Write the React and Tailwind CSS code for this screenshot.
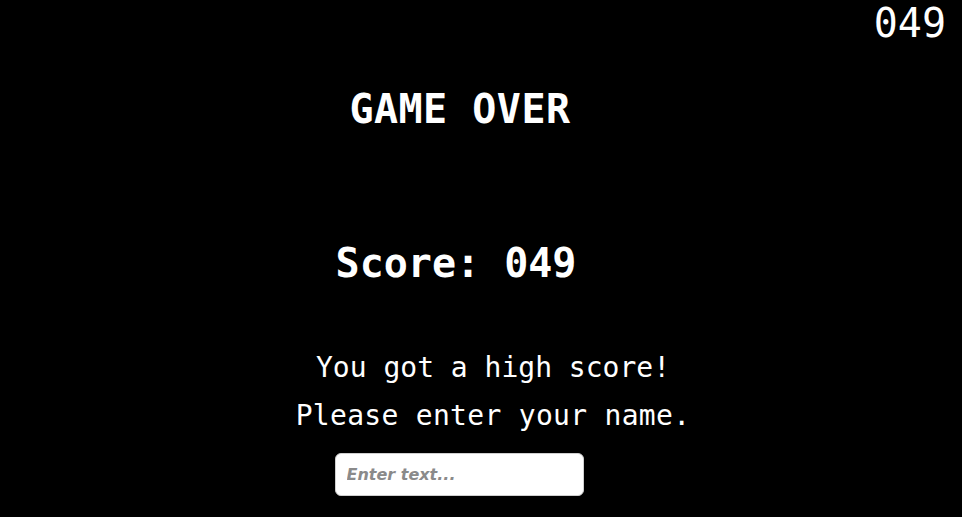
import { useState } from "react";

const PIXEL = { fontFamily: '"DejaVu Sans Mono", "Liberation Mono", monospace' };

export default function App() {
  const [name, setName] = useState("");
  const score = "049";

  return (
    <div className="w-full bg-[#ececec]">
      <div className="h-[517px] bg-black text-white flex flex-col" style={PIXEL}>
        {/* HUD score */}
        <div className="flex justify-end pr-[16px] pt-[3px]">
          <span className="text-[40px] leading-[40px]">{score}</span>
        </div>

        <div className="flex justify-center pr-[42px] mt-[46px]">
          <h1 className="text-[40px] leading-none font-bold tracking-[0.5px]">GAME OVER</h1>
        </div>

        <div className="flex justify-center pr-[50px] mt-[114px]">
          <p className="text-[40px] leading-none font-bold">Score: {score}</p>
        </div>

        <div className="flex flex-col items-center pl-[24px] mt-[71px]">
          <p className="text-[28px] leading-none">You got a high score!</p>
          <p className="text-[28px] leading-none tracking-[0.3px] mt-[20px]">Please enter your name.</p>
        </div>

        <div className="flex justify-center pr-[44px] mt-[23px]">
          <input
            value={name}
            onChange={(e) => setName(e.target.value)}
            placeholder="Enter text..."
            className="w-[249px] h-[43px] rounded-[6px] border border-[#cfcfcf] bg-white px-[11px] text-[16px] font-bold italic text-[#333] placeholder:text-[#8a8a8a] outline-none"
            style={{ fontFamily: '"DejaVu Sans", Verdana, sans-serif' }}
          />
        </div>
      </div>
    </div>
  );
}
